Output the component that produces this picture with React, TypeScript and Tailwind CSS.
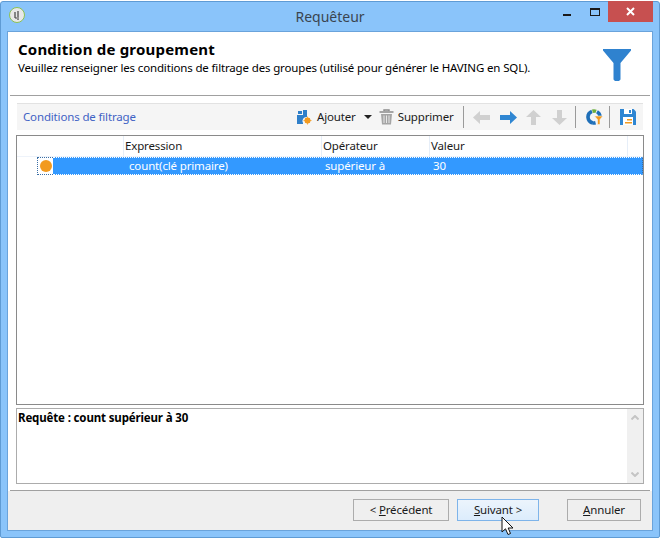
import type { ReactNode } from 'react';

function AddIcon() {
  return (
    <svg width="16" height="16" viewBox="0 0 16 16" className="shrink-0">
      <path d="M1 6 L7 6 L7 1 L11 1 L11 8 A4 4 0 0 0 7 14 L7 15 L1 15 Z" fill="#2f7fc9" />
      <path d="M2 2 L6 2 L6 5 L2 5 Z" fill="#2f7fc9" />
      <circle cx="11.5" cy="11.5" r="3" fill="#f29a1f" />
      <path d="M11.5 7.5 V15.5 M7.5 11.5 H15.5 M9 9 L14 14 M14 9 L9 14" stroke="#f29a1f" strokeWidth="0.8" />
    </svg>
  );
}

function TrashIcon() {
  return (
    <svg width="15" height="16" viewBox="0 0 15 16" className="shrink-0">
      <path d="M5 2 V1 H10 V2 M0.5 3 H14.5" stroke="#8a8a8a" strokeWidth="1.4" fill="none" />
      <path d="M2 5 H13 L12 15.5 H3 Z" fill="#a5a5a5" />
      <path d="M5 6.5 V14 M7.5 6.5 V14 M10 6.5 V14" stroke="#e8e8e8" strokeWidth="1" />
    </svg>
  );
}

function Arrow({ points, color, w, h }: { points: string; color: string; w: number; h: number }) {
  return (
    <svg width={w} height={h} viewBox={`0 0 ${w} ${h}`} className="shrink-0">
      <polygon points={points} fill={color} />
    </svg>
  );
}

function RefreshFilterIcon() {
  return (
    <svg width="17" height="16" viewBox="0 0 17 16" className="shrink-0" fill="none">
      <path d="M5.95 2.36 A6 6 0 0 0 6.96 13.9" stroke="#1f6fb8" strokeWidth="3.6" />
      <path d="M6.45 2.2 A6 6 0 0 1 10.05 2.36" stroke="#6cae3c" strokeWidth="3.6" />
      <path d="M11 2.8 A6 6 0 0 1 14 7.5" stroke="#1f6fb8" strokeWidth="3.6" />
      <path d="M6.96 13.9 A6 6 0 0 0 9.55 13.8" stroke="#1f6fb8" strokeWidth="3.6" />
      <path d="M8.5 7 H17 L14 10.5 V15.5 H11.5 V10.5 Z" fill="#f29a1f" stroke="#f5f5f5" strokeWidth="0.6" />
    </svg>
  );
}

function SaveIcon() {
  return (
    <svg width="16" height="16" viewBox="0 0 16 16" className="shrink-0">
      <path d="M0 0 H13.5 L16 2.5 V16 H0 Z" fill="#2f86d2" />
      <rect x="4" y="0" width="8" height="5" fill="#ffffff" />
      <rect x="9" y="1" width="2" height="3" fill="#2f86d2" />
      <rect x="3" y="8" width="10" height="8" fill="#ffffff" />
      <rect x="7" y="10" width="5" height="1.5" fill="#f29a1f" />
      <rect x="5" y="13" width="7" height="1.5" fill="#f29a1f" />
    </svg>
  );
}

function FunnelIcon() {
  return (
    <svg width="28" height="32" viewBox="0 0 28 32">
      <path d="M0 0 H28 V1.5 L17.5 14 V30.5 L16 32 H12 L10.5 30.5 V14 L0 1.5 Z" fill="#2f82cf" />
    </svg>
  );
}

function Cursor() {
  return (
    <svg width="14" height="20" viewBox="0 0 14 20" className="absolute left-[501px] top-[516px]">
      <path d="M1 1 V16 L4.5 12.8 L7 18.5 L9.5 17.5 L7.2 12 L12 12 Z" fill="#ffffff" stroke="#111111" strokeWidth="1" />
    </svg>
  );
}

function Separator() {
  return <div className="h-[22px] w-px bg-[#9a9a9a] shrink-0" />;
}

function DialogButton({ width, active, children }: { width: string; active?: boolean; children: ReactNode }) {
  return (
    <button
      className={
        width +
        ' h-[22px] flex items-center justify-center border text-[11.5px] tracking-[-0.15px] text-[#1a1a1a] ' +
        (active ? 'border-[#7eb4ea] bg-gradient-to-b from-[#ecf4fc] to-[#dcecfc]' : 'border-[#acacac] bg-[#efefef]')
      }
    >
      {children}
    </button>
  );
}

export default function App() {
  return (
    <div className="relative h-[547px] w-[665px] overflow-hidden bg-white font-['Noto_Sans',sans-serif]">
      <div className="mt-px flex h-[537px] w-[660px] flex-col rounded-t-[3px] rounded-b-[2px] border border-[#5f9bd4] bg-[#8ac4fa] px-[6px] pb-[6px]">
        <div className="relative flex h-[29px] shrink-0 items-center justify-center text-[14px] text-[#3a4450]">
          <div className="absolute left-[2px] top-[5px] flex h-4 w-4 items-center justify-center rounded-full border border-[#8cc152] bg-[#e8e8e8]">
            <svg width="10" height="11" viewBox="0 0 10 11">
              <path d="M3 2 V8 M6 1 V7 M6 9 V10 M3 8 L7 8" stroke="#444444" strokeWidth="1.2" fill="none" />
            </svg>
          </div>
          <span className="-mt-[1px]">Requêteur</span>
          <div className="absolute -top-px right-0 flex items-start">
            <div className="flex h-[21px] w-[29px] items-center justify-center pt-[6px]">
              <div className="h-[2px] w-[8px] bg-[#1a1a1a]" />
            </div>
            <div className="flex h-[21px] w-[27px] items-start justify-center pt-[7px]">
              <div className="h-[8px] w-[10px] border border-t-2 border-[#1a1a1a]" />
            </div>
            <div className="flex h-[21px] w-[45px] items-center justify-center bg-[#c75050]">
              <svg width="9" height="9" viewBox="0 0 9 9">
                <path d="M1 1 L8 8 M8 1 L1 8" stroke="#ffffff" strokeWidth="2" />
              </svg>
            </div>
          </div>
        </div>

        <div className="flex min-h-0 flex-1 flex-col border border-[#6aa3db] bg-white">
          <div className="relative h-[63px] shrink-0 pl-[10px] pt-[7px]">
            <div className="text-[15px] font-bold leading-[20px] tracking-[0.2px] text-black">Condition de groupement</div>
            <div className="text-[11.5px] leading-[18px] tracking-[-0.15px] text-black">
              Veuillez renseigner les conditions de filtrage des groupes (utilisé pour générer le HAVING en SQL).
            </div>
            <div className="absolute right-[21px] top-[17px]">
              <FunnelIcon />
            </div>
          </div>
          <div className="mx-[2px] h-px shrink-0 bg-[#a0a0a0]" />

          <div className="flex min-h-0 flex-1 flex-col px-[8px] pt-[7px]">
            <div className="ml-px mr-[1px] flex h-[27px] shrink-0 items-center border-t border-t-[#e2e2e2] bg-[#f5f5f5] pl-[6px] text-[11.5px] tracking-[-0.15px]">
              <span className="w-[273px] text-[#3f62c4]">Conditions de filtrage</span>
              <AddIcon />
              <span className="ml-[5px] text-[#1a1a1a]">Ajouter</span>
              <svg width="8" height="4" viewBox="0 0 8 4" className="ml-[8px]">
                <polygon points="0,0 8,0 4,4" fill="#222222" />
              </svg>
              <span className="ml-[7px]">
                <TrashIcon />
              </span>
              <span className="ml-[4px] text-[#1a1a1a]">Supprimer</span>
              <div className="ml-[9px]">
                <Separator />
              </div>
              <div className="ml-[9px] flex items-center">
                <Arrow w={17} h={13} color="#d0d0d0" points="0,6.5 7,0 7,4 17,4 17,9 7,9 7,13" />
                <div className="ml-[10px]">
                  <Arrow w={17} h={13} color="#2f86d2" points="17,6.5 10,0 10,4 0,4 0,9 10,9 10,13" />
                </div>
                <div className="ml-[9px]">
                  <Arrow w={15} h={15} color="#d0d0d0" points="7.5,0 15,7 10,7 10,15 5,15 5,7 0,7" />
                </div>
                <div className="ml-[11px]">
                  <Arrow w={15} h={15} color="#d0d0d0" points="7.5,15 15,8 10,8 10,0 5,0 5,8 0,8" />
                </div>
              </div>
              <div className="ml-[8px]">
                <Separator />
              </div>
              <div className="ml-[10px]">
                <RefreshFilterIcon />
              </div>
              <div className="ml-[6px]">
                <Separator />
              </div>
              <div className="ml-[10px]">
                <SaveIcon />
              </div>
            </div>

            <div className="mt-[5px] h-[270px] shrink-0 border border-[#8a8a8a] bg-white text-[11.5px] tracking-[-0.15px]">
              <div className="flex h-[21px] items-center border-b border-[#eef3fa] text-[#1a1a1a]">
                <div className="h-full w-[107px] border-r border-[#e6eef8]" />
                <div className="h-full w-[198px] border-r border-[#e6eef8] pl-px leading-[20px]">Expression</div>
                <div className="h-full w-[108px] border-r border-[#e6eef8] pl-px leading-[20px]">Opérateur</div>
                <div className="h-full w-[198px] border-r border-[#e6eef8] pl-px leading-[20px]">Valeur</div>
              </div>
              <div className="flex h-[18px] items-center">
                <div className="flex h-full w-[36px] shrink-0 items-center justify-end">
                  <div className="flex h-full w-[16px] items-center justify-center border-y border-l border-dotted border-[#3a6ea5]">
                    <div className="h-[12px] w-[12px] rounded-full bg-[#f29a1f]" />
                  </div>
                </div>
                <div className="flex h-full flex-1 items-center border-y border-r border-dotted border-y-white border-r-[#3a6ea5] bg-[#3399ff] text-white">
                  <span className="ml-[76px] w-[196px]">count(clé primaire)</span>
                  <span className="w-[108px]">supérieur à</span>
                  <span>30</span>
                </div>
              </div>
            </div>

            <div className="mt-[3px] flex h-[76px] shrink-0 border border-[#acacac] bg-white">
              <div className="flex-1 pl-px text-[11.5px] font-bold leading-[18px] tracking-[-0.15px] text-black">Requête : count supérieur à 30</div>
              <div className="flex w-[16px] flex-col items-center justify-between bg-[#f0f0f0] py-[6px]">
                <svg width="8" height="5" viewBox="0 0 8 5">
                  <path d="M0.5 4.5 L4 1 L7.5 4.5" stroke="#c4c4c4" strokeWidth="2" fill="none" />
                </svg>
                <svg width="8" height="5" viewBox="0 0 8 5">
                  <path d="M0.5 0.5 L4 4 L7.5 0.5" stroke="#c4c4c4" strokeWidth="2" fill="none" />
                </svg>
              </div>
            </div>
          </div>

          <div className="mx-[2px] mb-0 mt-[6px] h-px shrink-0 bg-[#a0a0a0]" />
          <div className="flex h-[39px] shrink-0 items-start bg-[#efefef] pl-[345px] pt-[8px]">
            <DialogButton width="w-[96px]">
              &lt;&nbsp;<u>P</u>récédent
            </DialogButton>
            <div className="ml-[8px]">
              <DialogButton width="w-[82px]" active>
                <span><u>S</u>uivant &gt;</span>
              </DialogButton>
            </div>
            <div className="ml-[28px]">
              <DialogButton width="w-[74px]">
                <span><u>A</u>nnuler</span>
              </DialogButton>
            </div>
          </div>
        </div>
      </div>
      <Cursor />
    </div>
  );
}
